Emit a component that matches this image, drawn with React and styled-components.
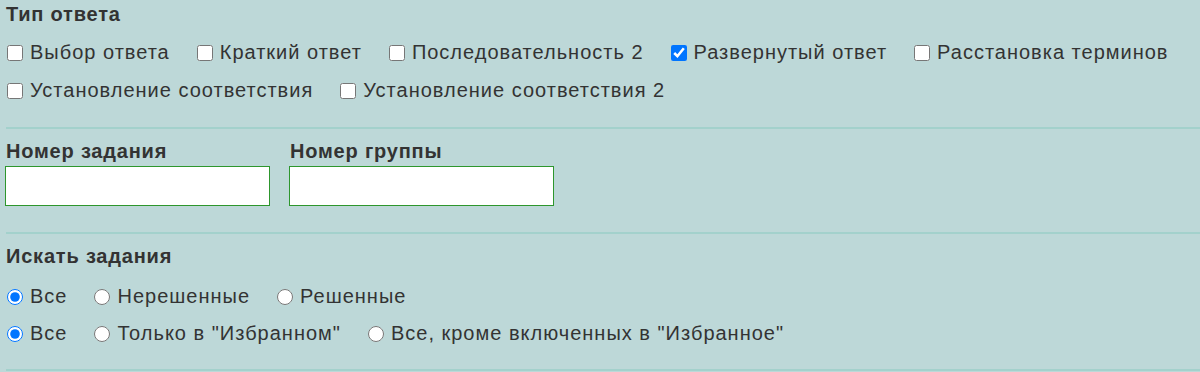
import { createGlobalStyle, styled } from "styled-components";

const GlobalStyle = createGlobalStyle`
  html, body {
    margin: 0;
    padding: 0;
    background: #bdd8d8;
  }
  body {
    font-family: "Liberation Sans", Arial, sans-serif;
    color: #333;
  }
`;

const answerTypes = [
  { label: "Выбор ответа" },
  { label: "Краткий ответ" },
  { label: "Последовательность 2" },
  { label: "Развернутый ответ", checked: true },
  { label: "Расстановка терминов" },
  { label: "Установление соответствия" },
  { label: "Установление соответствия 2" },
];

const solvedFilter = ["Все", "Нерешенные", "Решенные"];
const favFilter = ["Все", 'Только в "Избранном"', 'Все, кроме включенных в "Избранное"'];

const App = () => {
  return (
    <Page>
      <GlobalStyle />
      <Section $pad="2px 0 25px">
        <Title>Тип ответа</Title>
        <Options>
          {answerTypes.map((t) => (
            <Option key={t.label}>
              <Check type="checkbox" defaultChecked={t.checked} />
              {t.label}
            </Option>
          ))}
        </Options>
      </Section>

      <Section $pad="10px 0 26px">
        <Fields>
          <Field>
            <FieldTitle>Номер задания</FieldTitle>
            <TextInput type="text" />
          </Field>
          <Field>
            <FieldTitle>Номер группы</FieldTitle>
            <TextInput type="text" />
          </Field>
        </Fields>
      </Section>

      <Section $pad="10px 0 24px">
        <Title>Искать задания</Title>
        <RadioRow>
          {solvedFilter.map((l, i) => (
            <Option key={l}>
              <Check type="radio" name="solved" defaultChecked={i === 0} />
              {l}
            </Option>
          ))}
        </RadioRow>
        <RadioRow>
          {favFilter.map((l, i) => (
            <Option key={l}>
              <Check type="radio" name="fav" defaultChecked={i === 0} />
              {l}
            </Option>
          ))}
        </RadioRow>
      </Section>
    </Page>
  );
};

export default App;

const Page = styled.div`
  width: 1200px;
  padding: 0 0 0 6px;
  box-sizing: border-box;
`;

const Section = styled.div`
  padding: ${(p) => p.$pad};
  border-bottom: 2px solid #a3d1cc;
`;

const Title = styled.div`
  font-size: 20px;
  font-weight: bold;
  line-height: 24px;
  letter-spacing: 0.8px;
  color: #333;
  margin-bottom: 3px;
`;

const Options = styled.div`
  display: flex;
  flex-wrap: wrap;
  column-gap: 26px;
  row-gap: 15px;
  padding-top: 12px;
`;

const RadioRow = styled.div`
  display: flex;
  column-gap: 26px;
  padding-top: 14px;
`;

const Option = styled.label`
  display: flex;
  align-items: center;
  gap: 7px;
  font-size: 20px;
  line-height: 23px;
  letter-spacing: 1px;
  color: #333;
  white-space: nowrap;
`;

const Check = styled.input`
  width: 16px;
  height: 16px;
  margin: 0 0 0 1px;
  accent-color: #0075ff;
`;

const Fields = styled.div`
  display: flex;
  gap: 20px;
`;

const Field = styled.div`
  display: flex;
  flex-direction: column;
  gap: 3px;
`;

const FieldTitle = styled.div`
  font-size: 20px;
  font-weight: bold;
  line-height: 24px;
  letter-spacing: 0.8px;
  color: #333;
`;

const TextInput = styled.input`
  width: 265px;
  height: 40px;
  box-sizing: border-box;
  border: 1.5px solid #2d962d;
  background: #fff;
  margin: 0 0 0 -1px;
  outline: none;
  font-size: 18px;
`;
